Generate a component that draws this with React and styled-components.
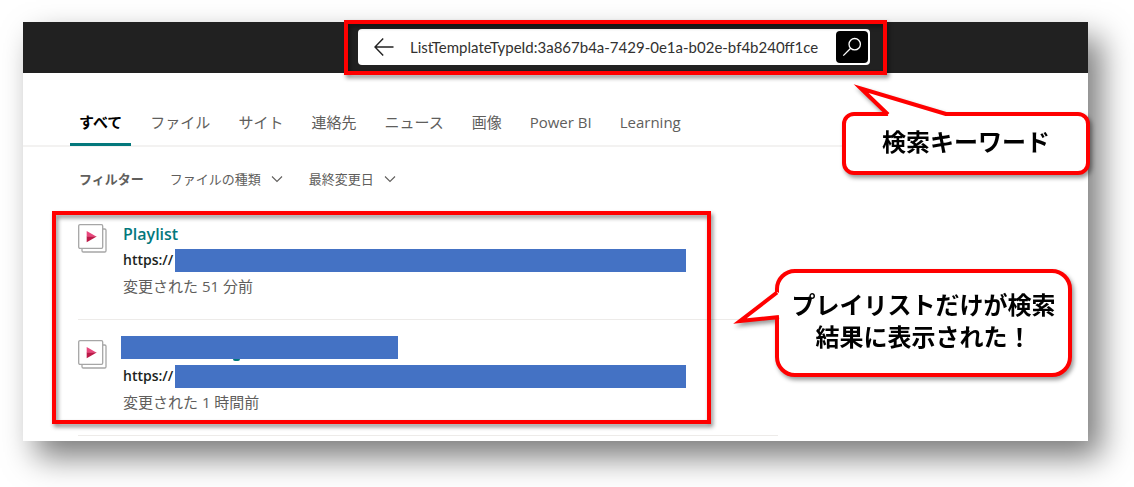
import React, { useState } from "react";
import styled, { createGlobalStyle } from "styled-components";

const tabs = [
  "すべて",
  "ファイル",
  "サイト",
  "連絡先",
  "ニュース",
  "画像",
  "Power BI",
  "Learning",
];

const filters = ["ファイルの種類", "最終変更日"];

const results = [
  { id: 1, title: "Playlist", modified: "変更された 51 分前" },
  { id: 2, title: "", modified: "変更された 1 時間前" },
];

const BackIcon = () => (
  <svg width="20" height="20" viewBox="0 0 20 20" fill="none" stroke="#222" strokeWidth="1.4">
    <path d="M19.5 10H1.2M9.2 1.5L1 10l8.2 8.5" />
  </svg>
);

const SearchIcon = () => (
  <svg width="20" height="20" viewBox="0 0 20 20" fill="none" stroke="#fff" strokeWidth="1.3">
    <circle cx="12.7" cy="7.2" r="5.7" />
    <path d="M8.7 11.2L1.3 18.6" />
  </svg>
);

const ChevronIcon = () => (
  <svg width="12" height="8" viewBox="0 0 12 8" fill="none" stroke="#605e5c" strokeWidth="1.1">
    <path d="M1 1.5l5 5 5-5" />
  </svg>
);

const PlaylistIcon = () => (
  <svg width="29" height="29" viewBox="0 0 29 29" fill="none">
    <path
      d="M4 24.5v2.2c0 .8.5 1.3 1.3 1.3h21.4c.8 0 1.3-.5 1.3-1.3V6.3c0-.8-.5-1.3-1.3-1.3h-2"
      stroke="#a6a6a6"
      strokeWidth="1.3"
    />
    <rect x=".7" y=".7" width="24" height="23.6" rx="1.3" fill="#fff" stroke="#a6a6a6" strokeWidth="1.3" />
    <path d="M8.7 7v5.7h10z" fill="#e8467c" />
    <path d="M8.7 18.3v-5.7h10z" fill="#bc1948" />
  </svg>
);

const App = () => {
  const [keyword, setKeyword] = useState(
    "ListTemplateTypeId:3a867b4a-7429-0e1a-b02e-bf4b240ff1ce"
  );

  return (
    <Page>
      <GlobalStyle />
      <Sheet>
        <Header>
          <SearchBox onSubmit={(e) => e.preventDefault()}>
            <BackButton type="button" aria-label="戻る">
              <BackIcon />
            </BackButton>
            <SearchInput
              aria-label="検索"
              spellCheck={false}
              value={keyword}
              onChange={(e) => setKeyword(e.target.value)}
            />
            <SearchButton type="submit" aria-label="検索">
              <SearchIcon />
            </SearchButton>
            <SearchFrame />
          </SearchBox>
        </Header>

        <Tabs>
          {tabs.map((tab, i) => (
            <Tab key={tab} href="#" $active={i === 0}>
              {tab}
            </Tab>
          ))}
        </Tabs>

        <Filters>
          <FilterLabel>フィルター</FilterLabel>
          {filters.map((name) => (
            <FilterButton key={name} type="button">
              {name}
              <ChevronIcon />
            </FilterButton>
          ))}
        </Filters>

        <Results>
          {results.map((item) => (
            <Result key={item.id}>
              <ResultIcon>
                <PlaylistIcon />
              </ResultIcon>
              <ResultBody>
                {item.title ? (
                  <Title href="#">{item.title}</Title>
                ) : (
                  <HiddenTitle />
                )}
                <Url>
                  https://
                  <Mask />
                </Url>
                <Modified>{item.modified}</Modified>
              </ResultBody>
            </Result>
          ))}
          <ResultsFrame />
        </Results>

        <KeywordCallout>
          検索キーワード
          <KeywordTail width="110" height="36" viewBox="0 0 110 36">
            <path d="M45 30L19 4.5L103 30V33H47z" fill="#fff" />
            <path d="M46 30.5L19 4.5L104 30" fill="none" stroke="#f00" strokeWidth="4" strokeMiterlimit="10" />
          </KeywordTail>
        </KeywordCallout>

        <ResultCallout>
          プレイリストだけが検索
          <br />
          結果に表示された！
          <ResultTail width="52" height="44" viewBox="0 0 52 44">
            <path d="M46 6L9 35L46 31H50V8z" fill="#fff" />
            <path d="M46 6.5L9 35L48 31" fill="none" stroke="#f00" strokeWidth="4" strokeMiterlimit="10" />
          </ResultTail>
        </ResultCallout>
      </Sheet>
    </Page>
  );
};

const GlobalStyle = createGlobalStyle`
  * {
    box-sizing: border-box;
  }

  body {
    margin: 0;
    background: #fff;
    font-family: "Open Sans", "Noto Sans CJK JP", sans-serif;
    overflow-x: hidden;
  }

  button,
  input {
    font-family: inherit;
    border: none;
    padding: 0;
    margin: 0;
    background: none;
  }

  svg {
    display: block;
    flex-shrink: 0;
  }
`;

const Page = styled.div`
  padding: 22px 46px 46px 23px;
`;

const Sheet = styled.main`
  position: relative;
  padding-bottom: 5px;
  background: #fff;
  box-shadow: 13px 16px 30px rgba(0, 0, 0, 0.52);
`;

const Header = styled.header`
  display: flex;
  align-items: center;
  height: 51px;
  padding: 0 218px 2px 335px;
  background: #212121;
`;

const SearchBox = styled.form`
  position: relative;
  display: flex;
  align-items: center;
  flex: 1;
  height: 36px;
  padding: 0 2px 0 16px;
  border-radius: 4px;
  background: #fff;
`;

const BackButton = styled.button`
  cursor: pointer;
`;

const SearchInput = styled.input`
  flex: 1;
  min-width: 0;
  margin-left: 16px;
  color: #323130;
  font-family: Lato, "Noto Sans CJK JP", sans-serif;
  font-size: 15px;
  outline: none;
`;

const SearchButton = styled.button`
  display: flex;
  align-items: center;
  justify-content: center;
  width: 32px;
  height: 32px;
  border-radius: 4px;
  background: #000;
  cursor: pointer;
`;

const Frame = styled.div`
  position: absolute;
  border: 4px solid #f00;
  filter: drop-shadow(2px 3px 2px rgba(0, 0, 0, 0.45));
  pointer-events: none;
`;

const SearchFrame = styled(Frame)`
  inset: -9px -17px -10px -14px;
`;

const Tabs = styled.nav`
  display: flex;
  gap: 10px;
  height: 74px;
  padding: 26px 47px 0;
  border-bottom: 2px solid #f3f2f1;
`;

const Tab = styled.a`
  height: 47px;
  padding: 0 9px;
  border-bottom: 3px solid ${(props) => (props.$active ? "#03787c" : "transparent")};
  color: ${(props) => (props.$active ? "#000" : "#605e5c")};
  font-size: 15px;
  font-weight: ${(props) => (props.$active ? 700 : 400)};
  line-height: 46px;
  text-decoration: none;
  white-space: nowrap;
`;

const Filters = styled.div`
  display: flex;
  align-items: center;
  gap: 26px;
  padding: 19px 56px 12px;
  color: #605e5c;
  font-size: 13px;
  line-height: 26px;
`;

const FilterLabel = styled.span`
  font-weight: 700;
`;

const FilterButton = styled.button`
  display: flex;
  align-items: center;
  gap: 10px;
  color: inherit;
  font-size: 13px;
  line-height: 26px;
  cursor: pointer;
`;

const Results = styled.section`
  position: relative;
  max-width: 755px;
  padding-left: 55px;
`;

const Result = styled.article`
  display: flex;
  gap: 16px;
  padding: 17px 0 20px;
  border-bottom: 1px solid #edebe9;
`;

const ResultIcon = styled.div`
  padding-top: 3px;
`;

const ResultBody = styled.div`
  flex: 1;
  padding-right: 92px;
  font-size: 15px;
  line-height: 26px;
`;

const Title = styled.a`
  display: block;
  color: #03787c;
  font-size: 16px;
  font-weight: 600;
  text-decoration: none;
`;

const HiddenTitle = styled.div`
  position: relative;
  width: 277px;
  height: 23px;
  margin: -1px 0 4px -2px;
  background: #4472c4;

  &::after {
    content: "";
    position: absolute;
    left: 112px;
    bottom: -2px;
    width: 7px;
    height: 2px;
    border-radius: 0 0 4px 4px;
    background: #03787c;
  }
`;

const Url = styled.div`
  display: flex;
  align-items: center;
  gap: 2px;
  color: #201f1e;
  font-size: 14px;
  font-weight: 600;
`;

const Mask = styled.span`
  flex: 1;
  height: 23px;
  background: #4472c4;
`;

const Modified = styled.div`
  color: #605e5c;
`;

const ResultsFrame = styled(Frame)`
  inset: 7px 67px 12px 29px;
`;

const Callout = styled.aside`
  position: absolute;
  border: 4px solid #f00;
  background: #fff;
  color: #000;
  font-family: "Noto Sans CJK JP", sans-serif;
  font-size: 24px;
  font-weight: 700;
  line-height: 32px;
  text-align: center;
  white-space: nowrap;
  filter: drop-shadow(2px 3px 2px rgba(0, 0, 0, 0.4));
`;

const KeywordCallout = styled(Callout)`
  top: 90px;
  right: -2px;
  width: 248px;
  height: 63px;
  padding-top: 9px;
  border-radius: 12px;
`;

const KeywordTail = styled.svg`
  position: absolute;
  top: -32px;
  left: -4px;
`;

const ResultCallout = styled(Callout)`
  top: 247px;
  right: 16px;
  width: 297px;
  height: 108px;
  padding-top: 15px;
  border-radius: 20px;
`;

const ResultTail = styled.svg`
  position: absolute;
  top: 13px;
  left: -48px;
`;

export default App;
